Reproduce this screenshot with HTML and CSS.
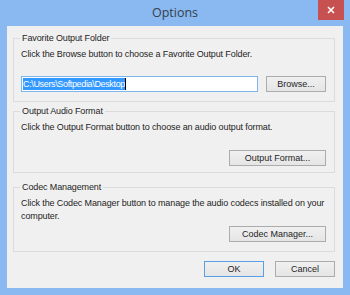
FILE: index.html
```html
<!DOCTYPE html>
<html lang="en">
<head>
  <meta charset="UTF-8" />
  <title>Options</title>
  <link rel="stylesheet" href="styles.css">
</head>
<body>
  <div class="window">
    <div class="titlebar">
      <span></span>
      <span class="title">Options</span>
      <span class="close">
        <svg width="8" height="8" viewBox="0 0 8 8"><path d="M1 1L7 7M7 1L1 7" stroke="#fff" stroke-width="1.6"/></svg>
      </span>
    </div>

    <div class="client">
      <fieldset class="group group-folder">
        <legend>Favorite Output Folder</legend>
        <p>Click the Browse button to choose a Favorite Output Folder.</p>
        <div class="row">
          <div class="path-box"><span class="sel">C:\Users\Softpedia\Desktop</span><span class="caret"></span></div>
          <button class="btn btn-browse">Browse...</button>
        </div>
      </fieldset>

      <fieldset class="group group-format">
        <legend>Output Audio Format</legend>
        <p>Click the Output Format button to choose an audio output format.</p>
        <div class="row row-end">
          <button class="btn btn-wide">Output Format...</button>
        </div>
      </fieldset>

      <fieldset class="group group-codec">
        <legend>Codec Management</legend>
        <p>Click the Codec Manager button to manage the audio codecs installed on your computer.</p>
        <div class="row row-end">
          <button class="btn btn-wide">Codec Manager...</button>
        </div>
      </fieldset>

      <div class="dialog-buttons">
        <button class="btn btn-default">OK</button>
        <button class="btn">Cancel</button>
      </div>
    </div>
  </div>
</body>
</html>
```

FILE: styles.css
```css
body {
  margin: 0;
  font-family: "Liberation Sans", Arial, sans-serif;
  font-size: 9px;
  letter-spacing: -0.12px;
  color: #1e1e1e;
}

.window {
  width: 350px;
  height: 295px;
  background: #8ab8f0;
  display: flex;
  flex-direction: column;
}

.titlebar {
  height: 26px;
  display: grid;
  grid-template-columns: 1fr auto 1fr;
  align-items: start;
}

.title {
  font-family: "Open Sans", sans-serif;
  font-size: 12.5px;
  letter-spacing: 0;
  color: #34404c;
  line-height: 26px;
}

.close {
  justify-self: end;
  margin-right: 6px;
  width: 26px;
  height: 20px;
  background: #c75050;
  display: flex;
  align-items: center;
  justify-content: center;
}

.client {
  flex: 1;
  margin: 0 7px 7px 7px;
  background: #f0f0f0;
  padding: 7px 8px 0 6px;
}

.group {
  margin: 0;
  border: 1px solid #dcdcdc;
  padding: 4px 8px 9px 7px;
}

.group legend {
  padding: 0 2px;
  margin-left: -1px;
  line-height: 11px;
}

.group p {
  margin: 0;
  line-height: 13px;
}

.group-folder .row {
  margin-top: 15px;
}

.group-format {
  margin-top: 4px;
  padding-bottom: 6px;
}

.group-format .row {
  margin-top: 16px;
}

.group-codec {
  margin-top: 9px;
}

.group-codec .row {
  margin-top: 3px;
}

.row {
  display: flex;
  gap: 8px;
}

.row-end {
  justify-content: flex-end;
}

.path-box {
  flex: 1;
  height: 16px;
  box-sizing: border-box;
  border: 1px solid #7eb4ea;
  background: #fff;
  padding: 1px 1px;
  display: flex;
  align-items: center;
}

.sel {
  background: #3399ff;
  color: #fff;
  line-height: 12px;
  letter-spacing: -0.35px;
}

.caret {
  width: 1px;
  height: 12px;
  background: #000;
}

.btn {
  font: inherit;
  color: #1e1e1e;
  height: 16px;
  padding: 0;
  border: 1px solid #acacac;
  background: linear-gradient(#f0f0f0, #e5e5e5);
  border-radius: 0;
}

.btn-browse {
  width: 60px;
}

.btn-wide {
  width: 97px;
}

.dialog-buttons {
  display: flex;
  justify-content: flex-end;
  gap: 11px;
  margin-top: 9px;
}

.dialog-buttons .btn {
  width: 60px;
}

.btn-default {
  border-color: #5a9ee6;
}
```
